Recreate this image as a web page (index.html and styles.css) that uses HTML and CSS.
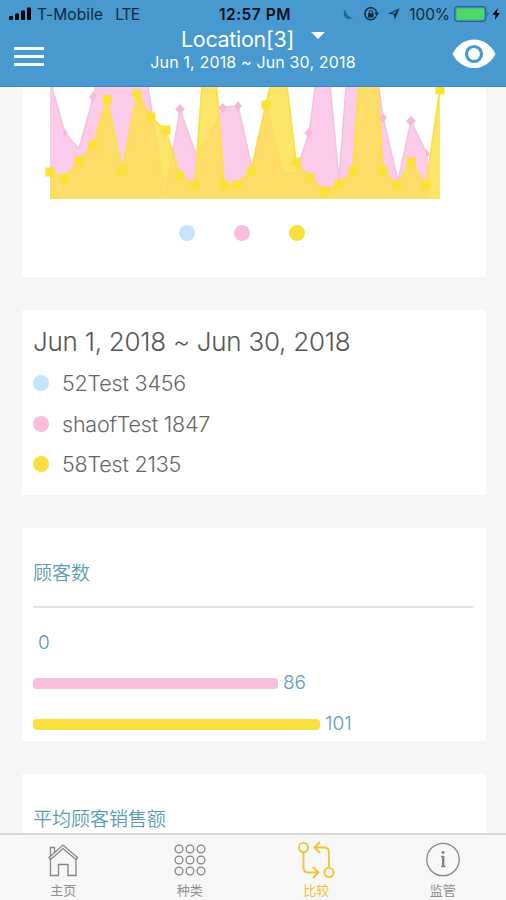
FILE: index.html
```html
<!DOCTYPE html>
<html lang="zh-CN">
<head>
    <meta charset="UTF-8">
    <meta name="viewport" content="width=device-width, initial-scale=1.0">
    <title>比较</title>
    <link rel="stylesheet" href="styles.css">
</head>
<body>

    <!-- Header -->
    <header class="header">
        <div class="status-bar">
            <div class="status-left">
                <svg width="23" height="14" viewBox="0 0 23 14">
                    <rect x="0" y="9" width="4" height="4" rx="1"/>
                    <rect x="6" y="6.500" width="4" height="6.500" rx="1"/>
                    <rect x="12" y="3.500" width="4" height="9.500" rx="1"/>
                    <rect x="18" y="0.500" width="4" height="12.500" rx="1"/>
                </svg>
                <span class="carrier">T-Mobile</span>
                <span class="network">LTE</span>
            </div>
            <div class="time">12:57 PM</div>
            <div class="status-right">
                <svg class="moon" width="11" height="11" viewBox="0 0 11 11">
                    <path d="M2.500 0.500C-1.500 4 1 12 10.500 9.300C6 8.500 2.500 5.500 2.500 0.500z"/>
                </svg>
                <svg class="lock" width="16" height="14" viewBox="0 0 16 14">
                    <path d="M13.200 9.500A6 6 0 1 1 13.600 5" fill="none" stroke="#12283a" stroke-width="1.500"/>
                    <path d="M11.200 5.500h4.800l-2.400 3.400z"/>
                    <rect x="5" y="6.300" width="5.600" height="4.200"/>
                    <path d="M6.200 6.500V5a1.600 1.600 0 0 1 3.200 0v1.500" fill="none" stroke="#12283a"/>
                </svg>
                <svg class="arrow" width="13" height="12" viewBox="0 0 13 12">
                    <path d="M12.500 0.500L7.800 11.500L6.800 6.500L1 5.800zM7.500 5.800L10.500 2.800L4.500 5.300z" fill-rule="evenodd"/>
                </svg>
                <span class="percent">100%</span>
                <svg class="battery" width="37" height="16" viewBox="0 0 37 16">
                    <rect x="0.700" y="0.700" width="31" height="14.600" rx="3" fill="none" stroke="#2f6688" stroke-width="1.300"/>
                    <rect x="2.500" y="2.500" width="27.500" height="11" rx="1" fill="#4bd964"/>
                    <path d="M33.300 5.500q2.500 2.500 0 5z" fill="#2f6688"/>
                </svg>
                <svg width="9" height="12" viewBox="0 0 9 12">
                    <path d="M5.800 0L0.500 6.700h3.200L2.800 12L8 5H4.800z" fill="#000"/>
                </svg>
            </div>
        </div>
        <div class="navbar">
            <div class="menu"><span></span><span></span><span></span></div>
            <div class="title">
                <div class="location">Location[3]<i class="caret"></i></div>
                <div class="range">Jun 1, 2018 ~ Jun 30, 2018</div>
            </div>
            <svg class="eye" width="44" height="30" viewBox="0 0 44 30">
                <path d="M0.500 15C10 -4.200 34 -4.200 43.500 15C34 33.800 10 33.800 0.500 15z" fill="#fff"/>
                <circle cx="22" cy="15" r="7.500" fill="none" stroke="#4799d0" stroke-width="3.200"/>
            </svg>
        </div>
    </header>

    <!-- Main Content -->
    <main class="content">
        <section class="card chart-card">
            <svg class="chart" width="464" height="112" viewBox="22 87 464 112">
                <path class="pink-area" d="M50 199V80L65 133L79 149L93 98L107 40L137 20L151 105L165 198L180 109L195 152L209 139L223 107L238 106L252 168L266 104L283 174L296 172L309 133L324 20L339 180L354 -20L368 10L383 117L398 181L411 121L426 152L428 154V199z"/>
                <path class="pink-line" d="M50 80L65 133L79 149L93 98L107 40L137 20L151 105L165 198L180 109L195 152L209 139L223 107L238 106L252 168L266 104L283 174L296 172L309 133L324 20L339 180L354 -20L368 10L383 117L398 181L411 121L426 152"/>
                <path class="pink-mark" d="M180 104l5 5l-5 5l-5-5zM223 103l4 5l-4 5l-5-5zM238 101l4 5l-4 5l-4-5zM309 128l4 5l-4 5l-5-5zM411 116l5 5l-5 5l-5-5zM383 113l4 5l-4 5l-4-5zM93 92l4 5l-4 5l-4-5zM65 129l3 4l-3 4l-3-4zM426 149l4 5l-4 3z"/>
                <path class="yellow-area" d="M50 199V172L65 178L79 161L93 145L107 99L122 171L137 94L151 117L166 131L180 176L195 185L209 -11L224 185L237 184L251 171L266 105L281 37L296 162L310 178L325 191L339 184L353 171L368 -50L383 171L397 185L411 162L426 185L440 90V199z"/>
                <path class="yellow-line" d="M50 172L65 178L79 161L93 145L107 99L122 171L137 94L151 117L166 131L180 176L195 185L209 -11L224 185L237 184L251 171L266 105L281 37L296 162L310 178L325 191L339 184L353 171L368 -50L383 171L397 185L411 162L426 185L440 90"/>
                <path class="yellow-mark" d="M45.500 172h9M60.500 178h9M74.500 161h9M88.500 145h9M102.500 99.500h9M117.500 171h9M132.500 94h9M146.500 117h9M161.500 130h9M175.500 176h9M190.500 185h9M219.500 185h9M232.500 184.500h9M246.500 171h9M261.500 105h9M291.500 162h9M305.500 178h9M320.500 191.500h9M334.500 184h9M348.500 171h9M378.500 171h9M392.500 185h9M406.500 162h9M421.500 185h9M435.500 90h9"/>
            </svg>
            <div class="legend">
                <span class="dot blue"></span>
                <span class="dot pink"></span>
                <span class="dot yellow"></span>
            </div>
        </section>

        <section class="card summary">
            <h2>Jun 1, 2018 ~ Jun 30, 2018</h2>
            <ul>
                <li><span class="dot blue"></span><span>52Test 3456</span></li>
                <li><span class="dot pink"></span><span>shaofTest 1847</span></li>
                <li><span class="dot yellow"></span><span>58Test 2135</span></li>
            </ul>
        </section>

        <section class="card metric">
            <h3>顾客数</h3>
            <hr>
            <div class="bar-row"><div class="bar" style="width: 0"></div><span>0</span></div>
            <div class="bar-row"><div class="bar pink" style="width: 245px"></div><span>86</span></div>
            <div class="bar-row"><div class="bar yellow" style="width: 287px"></div><span>101</span></div>
        </section>

        <section class="card metric">
            <h3>平均顾客销售额</h3>
        </section>
    </main>

    <!-- Tab Bar -->
    <nav class="tabbar">
        <a class="tab">
            <svg width="40" height="40" viewBox="0 0 40 40">
                <path d="M6 18.500L20 6L34.500 18.500L33 20.500L20 9.500L7.500 20.500zM7.500 20.500V36.500H15.500V25.500H25V36.500H33V20.500M7.500 17V8.500h4v5"/>
            </svg>
            <span>主页</span>
        </a>
        <a class="tab">
            <svg width="40" height="40" viewBox="0 0 40 40">
                <circle cx="9" cy="10" r="3.900"/><circle cx="20" cy="10" r="3.900"/><circle cx="31" cy="10" r="3.900"/>
                <circle cx="9" cy="21" r="3.900"/><circle cx="20" cy="21" r="3.900"/><circle cx="31" cy="21" r="3.900"/>
                <circle cx="9" cy="32" r="3.900"/><circle cx="20" cy="32" r="3.900"/><circle cx="31" cy="32" r="3.900"/>
            </svg>
            <span>种类</span>
        </a>
        <a class="tab active">
            <svg width="40" height="40" viewBox="0 0 40 40">
                <circle cx="7.500" cy="8.500" r="4.600"/><circle cx="33" cy="33.500" r="4.600"/>
                <path d="M7.500 13V28.500Q7.500 33.500 12.500 33.500H22M17 28l5.500 5.500L17 39M33 29V13.500Q33 8.500 28 8.500H18.500M24 3l-5.500 5.500L24 14"/>
            </svg>
            <span>比较</span>
        </a>
        <a class="tab">
            <svg width="40" height="40" viewBox="0 0 40 40">
                <circle cx="20" cy="20.500" r="16.200"/>
                <path class="info" d="M20.200 17V27.500"/>
                <path d="M18 17.500H20.500M18 27.500H22.500"/>
                <circle class="info-dot" cx="20" cy="13.500" r="1.500"/>
            </svg>
            <span>监管</span>
        </a>
    </nav>

</body>
</html>
```
FILE: styles.css
```css
/* Global Styles */
* {
    box-sizing: border-box;
}
body {
    font-family: Inter, "Noto Sans CJK SC", sans-serif;
    background-color: #f6f6f6;
    margin: 0;
    height: 900px;
    overflow: hidden;
    display: flex;
    flex-direction: column;
}
svg {
    display: block;
    flex-shrink: 0;
}

/* Header */
.header {
    background-color: #4799d0;
    height: 87px;
    flex-shrink: 0;
    border-bottom: 1px solid #3d87ba;
}
.status-bar {
    height: 27px;
    padding: 1px 5px 0 9px;
    display: grid;
    grid-template-columns: 1fr auto 1fr;
    align-items: center;
    color: #12283a;
    fill: #12283a;
    font-size: 15.5px;
}
.status-left, .status-right {
    display: flex;
    align-items: center;
}
.status-left svg {
    fill: #000;
}
.carrier {
    margin-left: 5px;
    letter-spacing: 0.1px;
}
.network {
    margin-left: 12px;
    letter-spacing: -0.8px;
}
.time {
    color: #071019;
    font-weight: 600;
    letter-spacing: 0.5px;
}
.status-right {
    justify-content: flex-end;
}
.moon {
    fill: #28638c;
    margin-right: 9px;
}
.lock {
    margin-right: 8px;
}
.arrow {
    margin-right: 9px;
}
.percent {
    letter-spacing: -0.1px;
}
.battery {
    margin: 0 1px 0 4px;
}
.navbar {
    height: 59px;
    display: grid;
    grid-template-columns: 60px 1fr 60px;
    align-items: start;
    color: white;
}
.menu {
    display: flex;
    flex-direction: column;
    gap: 5px;
    padding: 20px 0 0 14px;
}
.menu span {
    width: 30px;
    height: 3px;
    background-color: #f2fbff;
}
.title {
    text-align: center;
}
.location {
    font-size: 21.5px;
    line-height: 24px;
    letter-spacing: -0.3px;
    display: flex;
    justify-content: center;
}
.caret {
    border: 7px solid transparent;
    border-top: 7px solid white;
    border-bottom: 0;
    margin: 5px 0 0 17px;
}
.range {
    font-size: 16px;
    line-height: 20px;
    letter-spacing: 0.15px;
    margin-top: 1px;
}
.eye {
    margin: 12px 0 0 6px;
}

/* Cards */
.content {
    flex: 1;
    min-height: 0;
    overflow: hidden;
    padding: 0 20px 0 22px;
}
.card {
    background-color: white;
    margin-bottom: 33px;
    padding: 0 12px 0 11px;
}
.chart-card {
    height: 190px;
    padding: 0;
}
.pink-area {
    fill: #fccbea;
}
.pink-line {
    fill: none;
    stroke: #f5c1df;
    stroke-width: 1.5;
}
.pink-mark {
    fill: #f5b9da;
}
.yellow-area {
    fill: #fce04c;
    fill-opacity: 0.83;
}
.yellow-line {
    fill: none;
    stroke: #fae04a;
    stroke-width: 2;
}
.yellow-mark {
    stroke: #fce235;
    stroke-width: 9;
}
.legend {
    display: flex;
    gap: 39px;
    padding: 26px 0 0 157px;
}
.dot {
    width: 16px;
    height: 16px;
    border-radius: 50%;
    flex-shrink: 0;
}
.blue {
    background-color: #c5e3fc;
}
.pink {
    background-color: #f8bedc;
}
.yellow {
    background-color: #f9e03f;
}
.summary {
    height: 185px;
    color: #666;
}
.summary h2 {
    font-size: 26px;
    font-weight: 350;
    line-height: 32px;
    letter-spacing: -0.25px;
    margin: 0;
    padding-top: 16px;
    color: #555;
    white-space: nowrap;
}
.summary ul {
    list-style: none;
    margin: 5px 0 0;
    padding: 0;
}
.summary li {
    height: 40.5px;
    display: flex;
    align-items: center;
    gap: 13px;
    font-size: 21.5px;
    font-weight: 350;
    letter-spacing: -0.2px;
}
.metric {
    height: 213px;
    color: #5c9bb6;
}
.metric h3 {
    font-size: 19px;
    font-weight: 350;
    line-height: 28px;
    margin: 0;
    padding-top: 32px;
}
.metric hr {
    height: 2px;
    border: none;
    background-color: #e4e4e4;
    margin: 18px 0 15px;
}
.bar-row {
    height: 40.5px;
    display: flex;
    align-items: center;
    gap: 5px;
    font-size: 19px;
    font-weight: 350;
}
.bar-row span {
    padding-bottom: 2px;
}
.bar {
    height: 11px;
    border-radius: 4px;
}

/* Tab Bar */
.tabbar {
    height: 67px;
    flex-shrink: 0;
    display: grid;
    grid-template-columns: repeat(4, 1fr);
    background-color: #f7f7f7;
    border-top: 2px solid #d8d8d8;
}
.tab {
    display: flex;
    flex-direction: column;
    align-items: center;
    padding-top: 4px;
    color: #8e8e8e;
    font-size: 13px;
    line-height: 18px;
}
.tab svg {
    fill: none;
    stroke: #858585;
    stroke-width: 1.3;
}
.tab span {
    margin-top: 2px;
}
.tab.active {
    color: #f2c230;
}
.tab.active svg {
    stroke: #f2c230;
    stroke-width: 1.8;
}
.tab .info {
    stroke-width: 2.4;
}
.tab .info-dot {
    fill: #858585;
    stroke: none;
}
```
